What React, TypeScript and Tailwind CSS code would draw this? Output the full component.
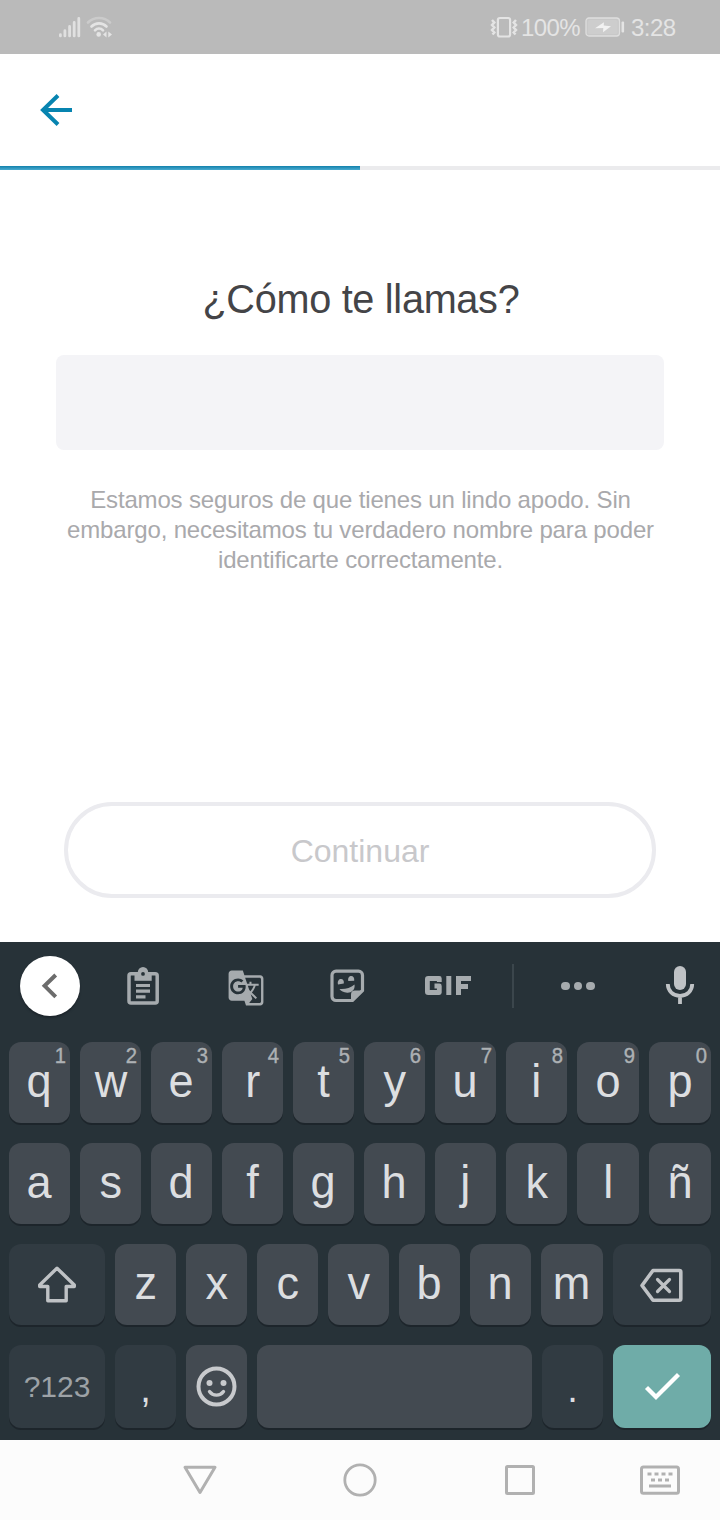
import type { ReactNode } from "react";
import { MdGTranslate } from "react-icons/md";

const digits = "1234567890";

function Key({ label, hint, width }: { label: string; hint?: string; width: string }) {
  return (
    <button
      className={`relative flex h-[81px] ${width} shrink-0 justify-center rounded-[12px] bg-[#434a51] text-[47px] leading-[78px] text-[#dcdee0] shadow-[0_2px_0_#1d252b]`}
    >
      <span className="scale-x-[0.960]">{label}</span>
      {hint && (
        <span className="absolute top-[2px] right-[4px] origin-right scale-x-[0.940] text-[21.500px] leading-[25px] text-[#adb1b4] [-webkit-text-stroke:0.4px_#adb1b4]">
          {hint}
        </span>
      )}
    </button>
  );
}

function SoftKey({ className, children }: { className: string; children?: ReactNode }) {
  return (
    <button
      className={`flex shrink-0 items-center justify-center rounded-[12px] shadow-[0_2px_0_#1d252b] ${className}`}
    >
      {children}
    </button>
  );
}

function StatusBar() {
  return (
    <div className="flex h-[54px] items-center bg-[#bababa] pr-[43px] pl-[58px] text-[24px] text-[#e4e4e4]">
      <svg width="23" height="24" viewBox="0 0 23 24" fill="none" stroke="#e0e0e0" strokeWidth="2.8" strokeLinecap="round">
        <path d="M2.4 19.700v1.200M6.9 15.700v5.2M11.6 11.500v9.4M16.2 7.500v13.4M20.8 3.500v17.4" />
      </svg>
      <svg className="ml-[5px]" width="28" height="24" viewBox="0 0 28 24" fill="none" strokeLinecap="round">
        <path d="M2 7.500C8 1.500 18 1.500 24 7.500" stroke="#cbcbcb" strokeWidth="2.600" />
        <path d="M5.500 11.500C9.500 7.300 16.500 7.300 20.500 11.500M9 15.300C11.300 12.800 14.700 12.800 17 15.300" stroke="#e4e4e4" strokeWidth="2.600" />
        <circle cx="12.700" cy="19.400" r="2.300" fill="#e4e4e4" />
        <path d="M20.500 16.500v6l-3.500-3zM22.300 16.500v6l3.700-3z" fill="#e4e4e4" />
      </svg>
      <svg className="ml-auto" width="28" height="24" viewBox="0 0 28 24" fill="none" stroke="#e4e4e4">
        <rect x="7.900" y="3" width="12.200" height="18.500" rx="2" strokeWidth="2.200" />
        <path d="M2 5l2.300 2.500L2 10l2.300 2.500L2 15l2.300 2.500L2.500 19.500M26 5l-2.300 2.500L26 10l-2.300 2.500L26 15l-2.300 2.500L25.500 19.500" strokeWidth="2.500" />
      </svg>
      <span className="ml-[3px] w-[60px] pt-px tracking-[-0.6px] whitespace-nowrap">100%</span>
      <svg className="ml-[4px]" width="40" height="22" viewBox="0 0 40 22">
        <rect x="1" y="2" width="33.500" height="18" rx="3" fill="#c8c8c8" stroke="#dedede" strokeWidth="1.300" />
        <rect x="3" y="4" width="29.500" height="14" rx="1.500" fill="#cdcdcd" />
        <path d="M10 12.300l9-6.100-.3 3.400 7.300.6-8 6 .3-4.300z" fill="#f2f2f2" />
        <rect x="36.500" y="5.500" width="2.600" height="11" rx="1" fill="#e4e4e4" />
      </svg>
      <span className="ml-[6px] w-[46px] pt-px tracking-[-0.5px] whitespace-nowrap">3:28</span>
    </div>
  );
}

function Toolbar() {
  return (
    <div className="flex h-[88px] items-center pl-[20px]">
      <button className="flex size-[60px] items-center justify-center rounded-full bg-white shadow-[0_2px_2px_#1d252b]">
        <svg width="60" height="60" viewBox="0 0 60 60" fill="none" stroke="#6c6c6c" strokeWidth="4">
          <path d="M35.700 19L24.600 29.800l11.100 11" />
        </svg>
      </button>
      <svg className="ml-[44px]" width="38" height="44" viewBox="0 0 38 44">
        <rect x="5" y="9.700" width="28.200" height="29.300" rx="2" fill="none" stroke="#a6abae" strokeWidth="3.500" />
        <path d="M10.500 9h17.200v7.800H10.500z" fill="#a6abae" />
        <circle cx="19" cy="8.300" r="5.200" fill="#a6abae" />
        <circle cx="19" cy="9.900" r="1.900" fill="#273238" />
        <path d="M12 21.500h14M12 27.200h14M12 32.800h9.500" stroke="#a6abae" strokeWidth="3.200" />
      </svg>
      <MdGTranslate className="mt-[3px] ml-[65px] text-[#a6abae]" size={38} />
      <svg className="ml-[63px]" width="40" height="40" viewBox="0 0 40 40" fill="none" stroke="#a6abae">
        <path d="M8 5.200H30.500a4 4 0 0 1 4 4V24.500L24.500 34.500H8a4 4 0 0 1-4-4V9.200a4 4 0 0 1 4-4z" strokeWidth="3.200" />
        <path d="M23 35.500V28.500a4 4 0 0 1 4-4H35.500z" fill="#a6abae" stroke="none" />
        <path d="M11.500 23C17 23.600 22.500 21.800 26.500 18.500 27.500 24 23 27 19.200 26.700 15.500 26.500 13 25 11.500 23z" fill="#a6abae" stroke="none" />
        <path d="M10 18.500c-.8-3.800 1-5.600 3-5.600s3.300 1.700 2.800 4.600zM20.300 15c-.6-3.500 1-5 2.900-5s3.500 1.600 3 4.800z" fill="#a6abae" stroke="none" />
      </svg>
      <svg className="ml-[55px]" width="50" height="22" viewBox="0 0 50 22" fill="none" stroke="#a6abae" strokeWidth="4.800">
        <path d="M16.300 7V3.500H5.200a.8.800 0 0 0-.8.800V16.700a.8.800 0 0 0 .8.800H16.300V11H11.500" strokeLinejoin="round" />
        <path d="M25.800 1v19M35.500 20V3.500H48M35 11.500H45" strokeWidth="5" />
      </svg>
      <div className="ml-[39px] h-[44px] w-[2px] bg-[#3b464c]" />
      <div className="ml-[47px] flex gap-[4px]">
        <i className="size-[8.500px] rounded-full bg-[#a6abae]" />
        <i className="size-[8.500px] rounded-full bg-[#a6abae]" />
        <i className="size-[8.500px] rounded-full bg-[#a6abae]" />
      </div>
      <svg className="mr-[24px] ml-auto" width="32" height="42" viewBox="0 0 32 42" fill="none">
        <rect x="10" y="1" width="12" height="24" rx="6" fill="#bfc2c5" />
        <path d="M3.800 19c0 7 5.400 11.800 12.200 11.800S28.200 26 28.200 19M16 31v8" stroke="#bfc2c5" strokeWidth="3.800" />
      </svg>
    </div>
  );
}

function Keyboard() {
  return (
    <div className="flex h-[498px] flex-col bg-[#273238]">
      <Toolbar />
      <div className="mt-[12px] flex flex-col gap-[20px] px-[9px]">
        <div className="flex gap-[10px]">
          {[..."qwertyuiop"].map((c, i) => (
            <Key key={c} label={c} hint={digits[i]} width={i > 7 ? "w-[62px]" : "w-[61px]"} />
          ))}
        </div>
        <div className="flex gap-[10px]">
          {[..."asdfghjklñ"].map((c, i) => (
            <Key key={c} label={c} width={i > 7 ? "w-[62px]" : "w-[61px]"} />
          ))}
        </div>
        <div className="flex gap-[10px]">
          <SoftKey className="h-[81px] w-[96px] bg-[#313b42]">
            <svg width="44" height="44" viewBox="0 0 44 44" fill="none" stroke="#bfc2c5" strokeWidth="3.400" strokeLinejoin="round">
              <path d="M22 5.200L4.700 22v1.500H12.800V37.700H31.200V23.500H39.300V22z" />
            </svg>
          </SoftKey>
          {[..."zxcvbnm"].map((c) => (
            <Key key={c} label={c} width={c === "m" ? "w-[62px]" : "w-[61px]"} />
          ))}
          <SoftKey className="h-[81px] w-[98px] bg-[#313b42]">
            <svg width="46" height="40" viewBox="0 0 46 40" fill="none" stroke="#bfc2c5" strokeWidth="3.600" strokeLinejoin="round">
              <path d="M14 5.500H40.300a1.500 1.500 0 0 1 1.500 1.500V33.800a1.500 1.500 0 0 1-1.500 1.500H14L3 20.500z" />
              <path d="M18.500 14.500l12 12M30.500 14.500l-12 12" strokeLinecap="round" strokeWidth="3.200" />
            </svg>
          </SoftKey>
        </div>
        <div className="flex gap-[10px]">
          <SoftKey className="h-[83px] w-[96px] bg-[#313b42] text-[30px] text-[#9da2a6]">?123</SoftKey>
          <SoftKey className="h-[83px] w-[61px] bg-[#313b42] pt-[6px] text-[38px] text-[#dcdee0]">,</SoftKey>
          <SoftKey className="h-[83px] w-[61px] bg-[#434a51]">
            <svg width="44" height="44" viewBox="0 0 44 44" fill="none" stroke="#c8cacd">
              <circle cx="21.500" cy="21.500" r="18" strokeWidth="4" />
              <circle cx="14.500" cy="18" r="3" fill="#c8cacd" stroke="none" />
              <circle cx="28.500" cy="18" r="3" fill="#c8cacd" stroke="none" />
              <path d="M14.500 26.500c3.500 4.800 10.500 4.800 14 0" strokeWidth="3.400" strokeLinecap="round" />
            </svg>
          </SoftKey>
          <SoftKey className="h-[83px] w-[275px] bg-[#434a51]" />
          <SoftKey className="h-[83px] w-[61px] bg-[#313b42] pt-[6px] text-[38px] text-[#dcdee0]">.</SoftKey>
          <SoftKey className="h-[83px] w-[98px] bg-[#6faca8]">
            <svg width="40" height="40" viewBox="0 0 40 40" fill="none" stroke="#fff" strokeWidth="4.300">
              <path d="M4.500 20.500L14 30 36.500 7.500" />
            </svg>
          </SoftKey>
        </div>
      </div>
    </div>
  );
}

function NavBar() {
  return (
    <div className="flex h-[80px] items-center bg-[#fcfcfc] pl-[180px]">
      <svg width="40" height="40" viewBox="0 0 40 40" fill="none" stroke="#b1b1b1" strokeWidth="3" strokeLinejoin="round">
        <path d="M5 7.300H35L20 32.500z" />
      </svg>
      <svg className="ml-[120px]" width="40" height="40" viewBox="0 0 40 40" fill="none" stroke="#b1b1b1" strokeWidth="2.800">
        <circle cx="20" cy="20" r="15.200" />
      </svg>
      <svg className="ml-[120px]" width="40" height="40" viewBox="0 0 40 40" fill="none" stroke="#b1b1b1" strokeWidth="3">
        <rect x="6.500" y="6.500" width="27" height="27" rx="1" />
      </svg>
      <svg className="ml-[100px]" width="40" height="40" viewBox="0 0 40 40" fill="none" stroke="#b1b1b1" strokeWidth="3">
        <rect x="1.500" y="7" width="37" height="26.200" rx="2" />
        <path d="M7.500 14h25.200" strokeDasharray="4 3" />
        <path d="M11 20h18" strokeDasharray="4 3" />
        <path d="M9 26h22" />
      </svg>
    </div>
  );
}

export default function App() {
  return (
    <div className="flex h-[1520px] w-[720px] flex-col overflow-hidden bg-white font-['Liberation_Sans',Arial,sans-serif]">
      <StatusBar />
      <header className="flex h-[112px] items-center pl-[36px]">
        <svg width="40" height="40" viewBox="0 0 40 40" fill="none" stroke="#0784b0" strokeWidth="4">
          <path d="M22 5.500L7 20l15 14.500M7 20H36" />
        </svg>
      </header>
      <div className="h-[4px] bg-[#ebebed]">
        <div className="h-full w-1/2 bg-linear-to-b from-[#0d81ac] to-[#48abd0]" />
      </div>
      <main className="flex h-[772px] flex-col items-center">
        <h1 className="mt-[105px] scale-x-[0.955] pl-[2px] text-[41.500px] leading-[48px] tracking-[-0.300px] whitespace-nowrap text-[#444447]">
          ¿Cómo te llamas?
        </h1>
        <input className="mt-[32px] h-[95px] w-[608px] shrink-0 rounded-[8px] bg-[#f4f4f7] px-6 text-[32px] outline-none" />
        <p className="mt-[35px] pl-px text-center text-[24px] leading-[30px] tracking-[-0.160px] whitespace-nowrap text-[#a9a9ac]">
          Estamos seguros de que tienes un lindo apodo. Sin
          <br />
          embargo, necesitamos tu verdadero nombre para poder
          <br />
          identificarte correctamente.
        </p>
        <button className="mt-[227px] h-[96px] w-[592px] shrink-0 rounded-full border-4 border-[#ebebef] pt-[2px] text-[32px] text-[#c8c8cb]">
          Continuar
        </button>
      </main>
      <Keyboard />
      <NavBar />
    </div>
  );
}
